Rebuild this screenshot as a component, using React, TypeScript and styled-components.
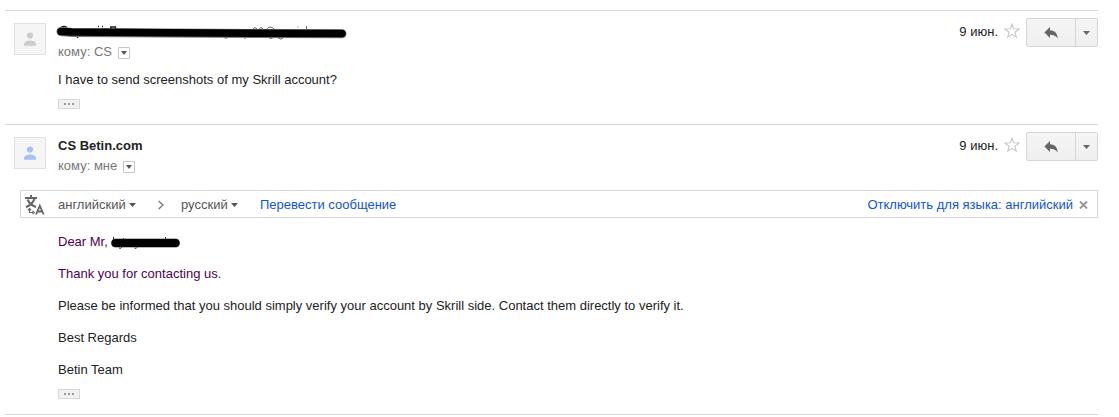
import React from "react";
import styled, { createGlobalStyle } from "styled-components";

const GlobalStyle = createGlobalStyle`
  * { box-sizing: border-box; }
  body {
    margin: 0;
    background: #fff;
    color: #222;
    font: 13px/16px "Liberation Sans", Arial, sans-serif;
  }
  button, select { font: inherit; color: inherit; margin: 0; padding: 0; }
  svg { display: block; flex: none; }
`;

const Thread = styled.main`
  margin: 10px 21px 0 5px;
  border-bottom: 1px solid #d8d8d8;
`;

const Message = styled.article`
  border-top: 1px solid #d8d8d8;
  padding: 0 0 15px 9px;
`;

const Header = styled.header`
  display: flex;
  align-items: flex-start;
`;

const Avatar = styled.div<{ $tone: string }>`
  flex: none;
  width: 32px;
  height: 32px;
  margin: 12px 12px 0 0;
  border: 1px solid #e0e0e0;
  background: #f5f5f5;
  color: ${(p) => p.$tone};
  display: flex;
  align-items: center;
  justify-content: center;
`;

const Sender = styled.div`
  flex: 1;
  min-width: 0;
  padding-top: 11px;
  line-height: 20px;
`;

const Name = styled.h2`
  margin: 0;
  height: 20px;
  font-size: 13px;
  line-height: 20px;
  font-weight: bold;
  color: #222;
`;

const Recipient = styled.div`
  display: flex;
  align-items: center;
  gap: 6px;
  color: #777;
`;

const DetailsButton = styled.button`
  width: 12px;
  height: 12px;
  margin-top: 2px;
  border: 1px solid #c6c6c6;
  border-radius: 1px;
  background: #fff;
  color: #555;
  display: flex;
  align-items: center;
  justify-content: center;
`;

const Actions = styled.div`
  display: flex;
  align-items: center;
  margin-top: 7px;
`;

const DateText = styled.time`
  margin-bottom: 2px;
`;

const StarButton = styled.button`
  border: 0;
  background: none;
  margin: 0 6px 4px;
`;

const SplitButton = styled.div`
  display: flex;
  width: 72px;
  height: 29px;
  border: 1px solid #d6d6d6;
  border-radius: 2px;
  background: linear-gradient(#f5f5f5, #efefef);
  color: #666;
`;

const SplitPart = styled.button<{ $menu?: boolean }>`
  flex: ${(p) => (p.$menu ? "0 0 22px" : "1")};
  border: 0;
  border-left: ${(p) => (p.$menu ? "1px solid #d6d6d6" : "0")};
  background: none;
  display: flex;
  align-items: center;
  justify-content: center;
`;

const Body = styled.div<{ $gap: number }>`
  padding: ${(p) => p.$gap}px 0 0 44px;
`;

const Paragraph = styled.p<{ $quoted?: boolean }>`
  margin: 0 0 16px;
  color: ${(p) => (p.$quoted ? "#500050" : "#222")};
  &:last-of-type { margin-bottom: 11px; }
`;

const InlineMark = styled.svg`
  display: inline-block;
  vertical-align: -2px;
  overflow: visible;
`;

const NameMark = styled.svg`
  overflow: visible;
`;

const TrimmedButton = styled.button`
  width: 22px;
  height: 10px;
  border: 1px solid #d8d8d8;
  background: #f1f1f1;
  color: #999;
  display: flex;
  align-items: center;
  justify-content: center;
`;

const TranslateBar = styled.div`
  display: flex;
  align-items: center;
  height: 28px;
  margin: 14px 0 0 6px;
  padding: 2px 9px 0 4px;
  border: 1px solid #d8d8d8;
  color: #555;
`;

const Language = styled.label`
  display: flex;
  align-items: center;
  gap: 3px;
  margin-right: 22px;
`;

const LanguageSelect = styled.select`
  appearance: none;
  border: 0;
  background: none;
`;

const BarLink = styled.a`
  color: #15c;
  text-decoration: none;
`;

const Spacer = styled.div`
  flex: 1;
`;

const CloseButton = styled.button`
  border: 0;
  background: none;
  margin-left: 6px;
`;

const TranslateIcon = styled.svg`
  margin-right: 13px;
`;

const Chevron = styled.svg`
  margin-right: 17px;
`;

const Caret = ({ width }: { width: number }) => (
  <svg width={width} height="4" viewBox="0 0 8 4" preserveAspectRatio="none" fill="currentColor" aria-hidden>
    <path d="M0 0h8L4 4z" />
  </svg>
);

const Person = () => (
  <svg width="12" height="14" viewBox="0 0 12 14" fill="currentColor" aria-hidden>
    <circle cx="6" cy="3.500" r="3.100" />
    <path d="M0 13.800v-1.800c0-2.500 3.800-3.500 6-3.500s6 1 6 3.500v1.800z" />
  </svg>
);

const MessageActions = () => (
  <Actions>
    <DateText>9 июн.</DateText>
    <StarButton aria-label="Пометить">
      <svg width="16" height="16" viewBox="0 0 16 16" fill="none" stroke="#c8c8c8" strokeWidth="1.100">
        <path d="M8 1.200l1.700 4.600 5.400.2-4.200 3.300 1.500 5-4.400-2.900-4.400 2.900 1.500-5L.9 6l5.400-.2z" />
      </svg>
    </StarButton>
    <SplitButton>
      <SplitPart aria-label="Ответить">
        <svg width="14" height="12" viewBox="0 0 14 12" fill="currentColor">
          <path d="M6 0v3.200c4.800.2 7.600 3.200 7.600 8.300C12 8.800 9.700 7.700 6 7.700V11L.4 5.500z" />
        </svg>
      </SplitPart>
      <SplitPart $menu aria-label="Ещё">
        <Caret width={7} />
      </SplitPart>
    </SplitButton>
  </Actions>
);

const To = ({ who }: { who: string }) => (
  <Recipient>
    <span>кому: {who}</span>
    <DetailsButton aria-label="Показать детали">
      <Caret width={6} />
    </DetailsButton>
  </Recipient>
);

const Trimmed = () => (
  <TrimmedButton aria-label="Показать скрытый текст">
    <svg width="10" height="2" viewBox="0 0 10 2" fill="currentColor">
      <path d="M0 0h2v2H0zM4 0h2v2H4zM8 0h2v2H8z" />
    </svg>
  </TrimmedButton>
);

export default function App() {
  return (
    <>
      <GlobalStyle />
      <Thread>
        <Message>
          <Header>
            <Avatar $tone="#ccc"><Person /></Avatar>
            <Sender>
              <Name>
                <NameMark width="288" height="20" viewBox="0 1 288 20" fill="none" role="img" aria-label="Имя скрыто">
                  <path d="M3 6.500q3-2 6 0M40 5.500h1M44 5.500h1M52 6h6M53 6v3M57.500 6v3M19.500 14v3" stroke="#222" strokeWidth="1.500" />
                  <path d="M195 8q2-3 4 0M201 8q2-3 4 0M208 9q4-6 9 0M209 16q4 3 8 0M166 16.500q2 1.500 4 0M187 14v4M220 17q3 2 5 0M240 5.500v1M248.500 5v4" stroke="#666" />
                  <path d="M3 10.500L14 11.500L108 12L284 12.800" stroke="#777" strokeWidth="9" strokeLinecap="round" strokeLinejoin="round" />
                  <path d="M3 10.500L14 11L108 11.800L284 12.500" stroke="#000" strokeWidth="7.500" strokeLinecap="round" strokeLinejoin="round" />
                </NameMark>
              </Name>
              <To who="CS" />
            </Sender>
            <MessageActions />
          </Header>
          <Body $gap={10}>
            <Paragraph>I have to send screenshots of my Skrill account?</Paragraph>
            <Trimmed />
          </Body>
        </Message>

        <Message>
          <Header>
            <Avatar $tone="#a4c2f4"><Person /></Avatar>
            <Sender>
              <Name>CS Betin.com</Name>
              <To who="мне" />
            </Sender>
            <MessageActions />
          </Header>
          <TranslateBar>
            <TranslateIcon width="20" height="20" viewBox="0 0 20 20" fill="none" stroke="#666" strokeWidth="2" aria-hidden>
              <path d="M0 3h12M6 0v3M2.500 4.500Q5 10 11 12M9.500 4Q7 10 1 12" />
              <path d="M4.500 13.500v4H8M2.800 15.200L4.500 13.500l1.700 1.700M7.500 15.800L9.200 17.500l-1.700 1.700" strokeWidth="1.200" />
              <path d="M11 19.500L14.800 10.800L18.700 19.500M12.500 16.500h5" strokeWidth="1.800" />
            </TranslateIcon>
            <Language>
              <LanguageSelect aria-label="Исходный язык"><option>английский</option></LanguageSelect>
              <Caret width={7} />
            </Language>
            <Chevron width="6" height="10" viewBox="0 0 6 10" fill="none" stroke="#777" strokeWidth="1.300" aria-hidden>
              <path d="M.7 1L5 5L.7 9" />
            </Chevron>
            <Language>
              <LanguageSelect aria-label="Язык перевода"><option>русский</option></LanguageSelect>
              <Caret width={7} />
            </Language>
            <BarLink href="#translate">Перевести сообщение</BarLink>
            <Spacer />
            <BarLink href="#disable">Отключить для языка: английский</BarLink>
            <CloseButton aria-label="Закрыть">
              <svg width="9" height="8" viewBox="0 0 9 8" fill="none" stroke="#999" strokeWidth="2">
                <path d="M1 .5l7 7M8 .5l-7 7" />
              </svg>
            </CloseButton>
          </TranslateBar>
          <Body $gap={16}>
            <Paragraph $quoted>
              Dear Mr,{" "}
              <InlineMark width="69" height="10" viewBox="0 0 69 10" fill="none" role="img" aria-label="Имя скрыто">
                <path d="M2.500-1v2M12.500 0v1M54.500-1v2M11 9q-1 2-3 1M26.500 9q-1 2-3 1" stroke="#500050" />
                <path d="M4.500 5H64.500" stroke="#777" strokeWidth="9" strokeLinecap="round" />
                <path d="M4.500 5H64.500" stroke="#000" strokeWidth="8" strokeLinecap="round" />
              </InlineMark>
            </Paragraph>
            <Paragraph $quoted>Thank you for contacting us.</Paragraph>
            <Paragraph>
              Please be informed that you should simply verify your account by Skrill side. Contact them directly to verify it.
            </Paragraph>
            <Paragraph>Best Regards</Paragraph>
            <Paragraph>Betin Team</Paragraph>
            <Trimmed />
          </Body>
        </Message>
      </Thread>
    </>
  );
}
